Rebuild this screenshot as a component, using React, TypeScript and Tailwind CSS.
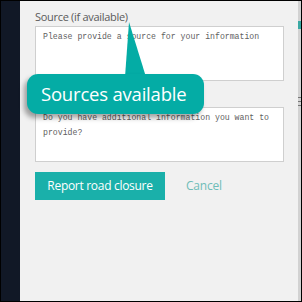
import React from "react";

const sans = { fontFamily: '"Open Sans", "Noto Sans", sans-serif' };
const mono = { fontFamily: '"Liberation Mono", "DejaVu Sans Mono", monospace' };

const areaCls =
    "block w-full h-[55px] bg-white border border-[#cfcfcf] resize-none px-[7px] pt-[2px] pb-[5px] text-[8.2px] leading-[15px] text-[#555] placeholder:text-[#5f5f5f] outline-none";

export default function App() {
    return (
        <div className="w-[302px] h-[302px] border border-black flex relative overflow-hidden" style={sans}>
            {/* side nav */}
            <div className="w-[19px] bg-[#111826] shrink-0" />

            {/* form */}
            <div className="flex-1 bg-[#f1f1f1] pl-[15px] pr-[14px] pt-[8px]">
                <label className="block text-[11px] leading-[16px] text-[#5a5a5a] tracking-[-0.3px]">Source (if available)</label>
                <textarea className={"mt-[1px] " + areaCls} style={mono} placeholder="Please provide a source for your information" />
                {/* label of the second field sits under the tooltip */}
                <div className="h-[26px]" />
                <textarea className={areaCls} style={mono} placeholder="Do you have additional information you want to provide?" />
                <div className="mt-[10px] flex items-center">
                    <button className="w-[130px] h-[28px] bg-[#1ab0aa] text-white text-[12px] tracking-[-0.3px]">Report road closure</button>
                    <button className="ml-[21px] text-[12px] text-[#6fbdb8] tracking-[-0.2px]">Cancel</button>
                </div>
            </div>

            {/* right rail */}
            <div className="w-[3px] bg-[#d2d2d2] shrink-0 flex flex-col">
                <div className="mt-[20px] h-[8px] bg-[#3aa9a4]" />
                <div className="mt-[68px] flex flex-col gap-[3px]">
                    <div className="h-px bg-[#777]" />
                    <div className="h-px bg-[#777]" />
                    <div className="h-px bg-[#777]" />
                </div>
            </div>

            {/* tooltip */}
            <svg className="absolute left-[122px] top-[19px]" width="26" height="58" viewBox="0 0 26 58">
                <polygon points="6,2 2,57 23,57" fill="#04aca5" />
            </svg>
            <div className="absolute left-[26px] top-[73px] w-[177px] h-[40px] bg-[#04aca5] rounded-[11px] shadow-[-3px_4px_5px_rgba(0,0,0,0.35)] flex items-center pl-[14px]">
                <span className="text-white text-[18.5px] tracking-[-0.2px]">Sources available</span>
            </div>
        </div>
    );
}
